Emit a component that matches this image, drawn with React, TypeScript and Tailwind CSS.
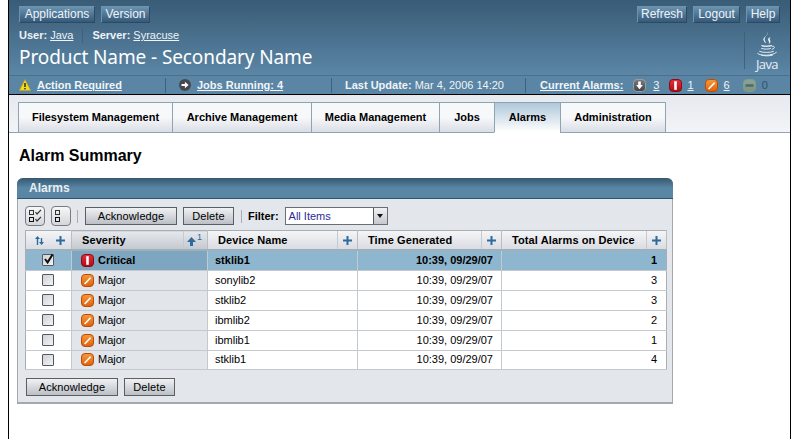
import type { ReactNode } from 'react';

const rows = [
  { severity: 'Critical', device: 'stklib1', time: '10:39, 09/29/07', total: 1, selected: true },
  { severity: 'Major', device: 'sonylib2', time: '10:39, 09/29/07', total: 3 },
  { severity: 'Major', device: 'stklib2', time: '10:39, 09/29/07', total: 3 },
  { severity: 'Major', device: 'ibmlib2', time: '10:39, 09/29/07', total: 2 },
  { severity: 'Major', device: 'ibmlib1', time: '10:39, 09/29/07', total: 1 },
  { severity: 'Major', device: 'stklib1', time: '10:39, 09/29/07', total: 4, last: true },
];

const tabs = [
  { label: 'Filesystem Management', width: 'w-[155px]' },
  { label: 'Archive Management', width: 'w-[140px]' },
  { label: 'Media Management', width: 'w-[129px]' },
  { label: 'Jobs', width: 'w-[56px]' },
  { label: 'Alarms', width: 'w-[67px]', active: true },
  { label: 'Administration', width: 'w-[106px]' },
];

function MastButton({ children, width }: { children: ReactNode; width: string }) {
  return (
    <button className={`${width} h-[17px] text-[12px] leading-[15px] text-[#eef3f7] border border-[#2c4a60] border-t-[#6d93ad] border-l-[#6d93ad] bg-gradient-to-b from-[#6a93b0] to-[#35597a]`}>
      {children}
    </button>
  );
}

function GrayButton({ children, width }: { children: ReactNode; width: string }) {
  return (
    <button className={`${width} h-[18px] text-[11px] tracking-[0.1px] leading-[16px] text-black border border-[#5a5f64] bg-gradient-to-b from-[#f0f1f3] to-[#bcc0c6]`}>
      {children}
    </button>
  );
}

function StatusIcon({ kind }: { kind: 'down' | 'critical' | 'major' | 'minor' }) {
  const top = { down: '#7a7d80', critical: '#e8303a', major: '#f79a3c', minor: '#8aa598' }[kind];
  const bottom = { down: '#404347', critical: '#b00c16', major: '#e2600c', minor: '#7a9588' }[kind];
  const edge = { down: '#9a9da0', critical: '#8c0a12', major: '#b84d08', minor: '#7f9a8e' }[kind];
  return (
    <svg width="13" height="13" viewBox="0 0 13 13" className="shrink-0">
      <defs>
        <linearGradient id={`status-${kind}`} x1="0" y1="0" x2="0" y2="1">
          <stop offset="0" stopColor={top} />
          <stop offset="1" stopColor={bottom} />
        </linearGradient>
      </defs>
      <rect x="0.5" y="0.5" width="12" height="12" rx="3.5" fill={`url(#status-${kind})`} stroke={edge} />
      {kind === 'down' && <path d="M5.200 2.500h2.600v3.600h2L6.500 10.200 3.200 6.100h2z" fill="#fff" />}
      {kind === 'critical' && <rect x="5.200" y="2.200" width="2.600" height="8.600" fill="#fff" />}
      {kind === 'major' && <path d="M3 9.400 9 3.200l1.200 1.100-6 6.200z" fill="#fff" />}
      {kind === 'minor' && <rect x="2.500" y="5.300" width="8" height="2.400" fill="#4e6a60" />}
    </svg>
  );
}

function Plus() {
  return (
    <svg width="9" height="9" viewBox="0 0 9 9">
      <path d="M3.500 0h2v3.500H9v2H5.500V9h-2V5.500H0v-2h3.500z" fill="#2f6a9e" />
    </svg>
  );
}

function Checkbox({ checked }: { checked?: boolean }) {
  return (
    <span className="block w-[12px] h-[12px] ml-[16px] rounded-[1px] border border-[#55595e] bg-gradient-to-br from-[#d0d2d8] to-[#f2f3f5] relative">
      {checked && (
        <svg width="12" height="12" viewBox="0 0 12 12" className="absolute -top-[2px] left-0">
          <path d="M2 6l2.600 3.400L9.600 1.400" fill="none" stroke="#111" strokeWidth="2" />
        </svg>
      )}
    </span>
  );
}

function SelectIcon({ checks }: { checks?: boolean }) {
  return (
    <span className="w-[20px] h-[20px] rounded-[4px] border border-[#777b80] bg-gradient-to-b from-[#f6f7f8] to-[#d3d6da] flex items-center justify-center">
      <svg width="14" height="14" viewBox="0 0 14 14">
        <rect x="1.500" y="1.500" width="4" height="4" fill="none" stroke="#333" />
        <rect x="1.500" y="8.500" width="4" height="4" fill="none" stroke="#111" />
        {checks && <path d="M7.500 3l1.500 2L13 .8M7.500 10l1.500 2L13 7.800" fill="none" stroke="#333" strokeWidth="1.200" />}
      </svg>
    </span>
  );
}

function JavaLogo() {
  return (
    <div className="flex flex-col items-center text-[#e8eff4]">
      <svg width="22" height="26" viewBox="0 0 22 27">
        <path d="M12 0c1 3-5 5-3 9 .5 1 1 2 1 3-3-3-4-5-1-7 1-1 3-3 3-5zM15 5c-4 2-3 3-2 5 .6 1 0 2-1 3 3-2 3-3 2-5-.5-1 0-2 1-3z" fill="currentColor" />
        <path d="M5 14c3 1 9 1 11 0-1 .8-9 1.200-10 .6M5 17c3 1 8 1 10 0M3 20c3 1.600 12 1.600 15 0M5 24c4 1 8 1 12 0M1 22c3 3 15 3 20-1" fill="none" stroke="currentColor" strokeWidth="1" />
        <path d="M16 15c3-1 4 2 0 3" fill="none" stroke="currentColor" strokeWidth="1" />
      </svg>
      <span className="text-[13px] leading-[12px] font-['Open_Sans',sans-serif] tracking-[-0.6px]">Java</span>
    </div>
  );
}

function HeaderCell({ children, right }: { children?: ReactNode; right?: ReactNode }) {
  return (
    <div className="flex items-center justify-between h-full pl-[10px] tracking-[0.1px]">
      <span className="font-bold">{children}</span>
      {right}
    </div>
  );
}

export default function App() {
  return (
    <div className="w-[800px] h-[439px] overflow-hidden bg-white pl-2 font-['Liberation_Sans',Arial,sans-serif] text-[11px] text-black">
      <div className="w-[783px] h-full border-x border-black flex flex-col">
        {/* masthead */}
        <header className="h-[75px] shrink-0 bg-gradient-to-b from-[#395c77] to-[#5b86a6] pl-[10px] pr-[10px] pt-[6px] flex justify-between">
          <div>
            <div className="flex gap-[6px]">
              <MastButton width="w-[76px]">Applications</MastButton>
              <MastButton width="w-[49px]">Version</MastButton>
            </div>
            <div className="flex items-center mt-[5px] h-[15px] text-[#eef3f7]">
              <span className="font-bold">User:</span>
              <a className="underline ml-[3px]">Java</a>
              <span className="w-px h-[15px] bg-[#3f627c] mx-[9px]" />
              <span className="font-bold">Server:</span>
              <a className="underline ml-[3px]">Syracuse</a>
            </div>
            <h1 className="mt-[2px] text-[19px] leading-[24px] tracking-[-0.1px] text-white font-['Noto_Sans',sans-serif]">Product Name - Secondary Name</h1>
          </div>
          <div className="flex flex-col items-end">
            <div className="flex gap-[6px]">
              <MastButton width="w-[50px]">Refresh</MastButton>
              <MastButton width="w-[47px]">Logout</MastButton>
              <MastButton width="w-[34px]">Help</MastButton>
            </div>
            <div className="mt-[9px] flex h-[38px] pr-[2px]">
              <span className="w-px h-[37px] bg-[#3f627c] mr-[11px]" />
              <JavaLogo />
            </div>
          </div>
        </header>

        {/* status bar */}
        <div className="h-[20px] shrink-0 bg-[#5a85a5] border-t border-[#4a718c] border-b border-b-black flex items-center text-[#f0f4f7] font-bold">
          <div className="w-[156px] pl-[10px] flex items-center gap-[6px] h-full">
            <svg width="12" height="12" viewBox="0 0 12 12"><path d="M6 .5 11.700 11.500H.3z" fill="#f4d71e" stroke="#b8a015" strokeWidth=".6" /><rect x="5.300" y="4" width="1.400" height="4" fill="#222" /><rect x="5.300" y="9" width="1.400" height="1.400" fill="#222" /></svg>
            <a className="underline">Action Required</a>
          </div>
          <span className="w-px h-[15px] bg-[#3f627c]" />
          <div className="w-[165px] pl-[13px] flex items-center gap-[6px]">
            <svg width="12" height="12" viewBox="0 0 12 12"><circle cx="6" cy="6" r="6" fill="#45494e" /><path d="M2.500 5h3.400V2.800L9.600 6 5.900 9.200V7H2.500z" fill="#fff" /></svg>
            <a className="underline">Jobs Running: 4</a>
          </div>
          <span className="w-px h-[15px] bg-[#3f627c]" />
          <div className="w-[193px] pl-[13px] whitespace-nowrap">
            Last Update: <span className="font-normal">Mar 4, 2006 14:20</span>
          </div>
          <span className="w-px h-[15px] bg-[#3f627c]" />
          <div className="pl-[14px] flex items-center">
            <a className="underline">Current Alarms:</a>
            <span className="ml-[10px]"><StatusIcon kind="down" /></span>
            <a className="underline font-normal ml-[7px]">3</a>
            <span className="ml-[10px]"><StatusIcon kind="critical" /></span>
            <a className="underline font-normal ml-[5px]">1</a>
            <span className="ml-[11px]"><StatusIcon kind="major" /></span>
            <a className="underline font-normal ml-[6px]">6</a>
            <span className="ml-[13px]"><StatusIcon kind="minor" /></span>
            <span className="font-normal text-[#33516a] ml-[6px]">0</span>
          </div>
        </div>

        {/* tabs */}
        <nav className="h-[38px] shrink-0 bg-gradient-to-b from-[#e6e9ef] to-[#f3f4f7] pl-[9px] flex items-end border-b border-[#8fa3b0]">
          {tabs.map((tab) => (
            <div
              key={tab.label}
              className={`${tab.width} h-[31px] -mb-px -mr-px flex items-center justify-center border border-[#8fa3b0] font-bold ${
                tab.active
                  ? 'bg-gradient-to-b from-[#afc8da] to-white border-b-white'
                  : 'bg-gradient-to-b from-[#f7f8fa] via-[#f7f8fa] to-[#d9dde4]'
              }`}
            >
              {tab.label}
            </div>
          ))}
        </nav>

        {/* page */}
        <main className="flex-1 pl-[8px]">
          <h2 className="mt-[13px] pl-[2px] text-[16px] leading-[20px] font-bold">Alarm Summary</h2>
          <section className="mt-[12px] w-[656px] border-b-2 border-x border-[#a4a8ab] bg-[#e3e6eb] rounded-t-[6px]">
            <div className="-mx-px h-[21px] rounded-t-[6px] bg-gradient-to-b from-[#365870] via-[#5a86a6] to-[#5a86a6] border-b border-[#33536a] pl-[12px] text-[12px] leading-[20px] font-bold text-[#e8eff4]">
              Alarms
            </div>
            <div className="px-[7px] pt-[7px] pb-[6px]">
              <div className="flex items-center h-[20px]">
                <SelectIcon checks />
                <span className="ml-[6px]"><SelectIcon /></span>
                <span className="w-px h-[13px] bg-[#a9adb2] ml-[6px] mr-[7px]" />
                <GrayButton width="w-[92px]">Acknowledge</GrayButton>
                <span className="ml-[6px]"><GrayButton width="w-[51px]">Delete</GrayButton></span>
                <span className="w-px h-[13px] bg-[#a9adb2] ml-[7px] mr-[6px]" />
                <span className="font-bold">Filter:</span>
                <div className="ml-[6px] w-[103px] h-[18px] flex border border-[#6a6e73] bg-white">
                  <span className="flex-1 pl-[3px] leading-[16px] text-[#2d2d9a]">All Items</span>
                  <span className="w-[14px] border-l border-[#55595e] bg-gradient-to-b from-[#f0f1f3] to-[#c5c8cd] flex items-center justify-center">
                    <svg width="6" height="4" viewBox="0 0 6 4"><path d="M0 0h6L3 4z" fill="#111" /></svg>
                  </span>
                </div>
              </div>

              <table className="mt-[4px] w-[641px] table-fixed border-collapse bg-white border border-[#a9aeb2]">
                <colgroup>
                  <col className="w-[46px]" />
                  <col className="w-[136px]" />
                  <col className="w-[150px]" />
                  <col className="w-[144px]" />
                  <col className="w-[165px]" />
                </colgroup>
                <thead>
                  <tr className="h-[18px] bg-gradient-to-b from-[#f4f5f7] to-[#d9dce2] border-b-2 border-[#9eb0bc]">
                    <th className="p-0 border-r border-[#b9bec3]">
                      <div className="flex items-center h-full pl-[9px] gap-[12px]">
                        <svg width="9" height="9" viewBox="0 0 9 9"><path d="M2.500 0 5 3H3.200v6H1.800V3H0zM6.500 9 4 6h1.800V2h1.400v4H9z" fill="#2f6a9e" /></svg>
                        <Plus />
                      </div>
                    </th>
                    <th className="p-0 text-left border-r border-[#b9bec3] bg-gradient-to-b from-[#e6e8ec] to-[#c3c8cf]">
                      <HeaderCell
                        right={
                          <span className="flex items-start pr-[5px] border-l border-[#c6cace] pl-[3px] h-[18px] pt-[2px] gap-[1px]">
                            <svg width="9" height="9" viewBox="0 0 9 9" className="mt-[4px]"><path d="M4.500 0 9 5H6v4H3V5H0z" fill="#2f6a9e" /></svg>
                            <span className="text-[9px] leading-[9px] font-normal text-[#2f6a9e]">1</span>
                          </span>
                        }
                      >
                        Severity
                      </HeaderCell>
                    </th>
                    {['Device Name', 'Time Generated', 'Total Alarms on Device'].map((label) => (
                      <th key={label} className="p-0 text-left border-r border-[#b9bec3]">
                        <HeaderCell
                          right={
                            <span className="flex items-center justify-center w-[20px] h-[18px] border-l border-[#c6cace]">
                              <Plus />
                            </span>
                          }
                        >
                          {label}
                        </HeaderCell>
                      </th>
                    ))}
                  </tr>
                </thead>
                <tbody>
                  {rows.map((row, i) => (
                    <tr key={i} className={`${row.last ? 'h-[19px]' : 'h-[20px]'} border-b border-[#c3c9ce] ${row.selected ? 'bg-[#8fb6cf] font-bold' : ''}`}>
                      <td className="p-0 border-r border-[#c3c9ce]">
                        <Checkbox checked={row.selected} />
                      </td>
                      <td className={`p-0 border-r border-[#c3c9ce] ${row.selected ? 'bg-[#7fa6c1]' : 'bg-[#e2e6ea]'}`}>
                        <div className="flex items-center pl-[9px] gap-[4px]">
                          <StatusIcon kind={row.selected ? 'critical' : 'major'} />
                          {row.severity}
                        </div>
                      </td>
                      <td className="p-0 pl-[7px] border-r border-[#c3c9ce]">{row.device}</td>
                      <td className="p-0 pr-[8px] text-right border-r border-[#c3c9ce]">{row.time}</td>
                      <td className="p-0 pr-[9px] text-right">{row.total}</td>
                    </tr>
                  ))}
                </tbody>
              </table>

              <div className="flex gap-[6px] mt-[8px] pl-px">
                <GrayButton width="w-[92px]">Acknowledge</GrayButton>
                <GrayButton width="w-[51px]">Delete</GrayButton>
              </div>
            </div>
          </section>
        </main>
      </div>
    </div>
  );
}
